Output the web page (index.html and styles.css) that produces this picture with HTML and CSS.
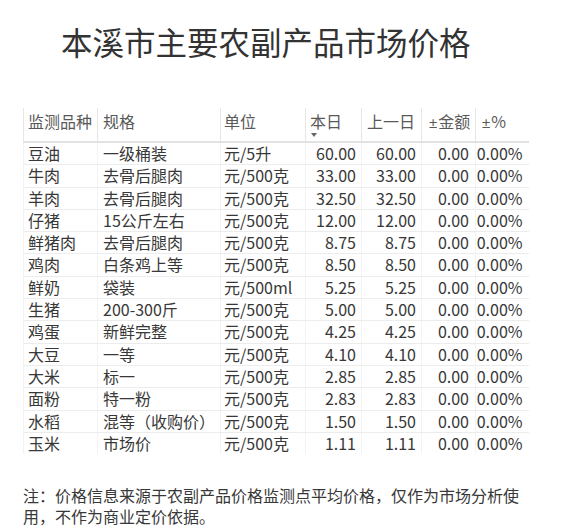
FILE: index.html
```html
<!DOCTYPE html>
<html lang="zh-CN">
<head>
<meta charset="utf-8">
<title>本溪市主要农副产品市场价格</title>
<link rel="stylesheet" href="styles.css">
</head>
<body>
<div class="page">
  <h1 class="title">本溪市主要农副产品市场价格</h1>
  <table class="prices">
    <colgroup>
      <col class="c1"><col class="c2"><col class="c3"><col class="c4"><col class="c5"><col class="c6"><col class="c7">
    </colgroup>
    <thead>
      <tr>
        <th class="p1">监测品种</th>
        <th class="p2">规格</th>
        <th class="p3">单位</th>
        <th class="p4">本日<span class="sort"></span></th>
        <th class="p5">上一日</th>
        <th class="p6"><span class="pm">±</span>金额</th>
        <th class="p7"><span class="pm">±</span>%</th>
      </tr>
    </thead>
    <tbody>
      <tr><td class="p1">豆油</td><td class="p2">一级桶装</td><td class="p3">元/5升</td><td class="n4">60.00</td><td class="n5">60.00</td><td class="n6">0.00</td><td class="n7">0.00%</td></tr>
      <tr><td class="p1">牛肉</td><td class="p2">去骨后腿肉</td><td class="p3">元/500克</td><td class="n4">33.00</td><td class="n5">33.00</td><td class="n6">0.00</td><td class="n7">0.00%</td></tr>
      <tr><td class="p1">羊肉</td><td class="p2">去骨后腿肉</td><td class="p3">元/500克</td><td class="n4">32.50</td><td class="n5">32.50</td><td class="n6">0.00</td><td class="n7">0.00%</td></tr>
      <tr><td class="p1">仔猪</td><td class="p2">15公斤左右</td><td class="p3">元/500克</td><td class="n4">12.00</td><td class="n5">12.00</td><td class="n6">0.00</td><td class="n7">0.00%</td></tr>
      <tr><td class="p1">鲜猪肉</td><td class="p2">去骨后腿肉</td><td class="p3">元/500克</td><td class="n4">8.75</td><td class="n5">8.75</td><td class="n6">0.00</td><td class="n7">0.00%</td></tr>
      <tr><td class="p1">鸡肉</td><td class="p2">白条鸡上等</td><td class="p3">元/500克</td><td class="n4">8.50</td><td class="n5">8.50</td><td class="n6">0.00</td><td class="n7">0.00%</td></tr>
      <tr><td class="p1">鲜奶</td><td class="p2">袋装</td><td class="p3">元/500ml</td><td class="n4">5.25</td><td class="n5">5.25</td><td class="n6">0.00</td><td class="n7">0.00%</td></tr>
      <tr><td class="p1">生猪</td><td class="p2">200-300斤</td><td class="p3">元/500克</td><td class="n4">5.00</td><td class="n5">5.00</td><td class="n6">0.00</td><td class="n7">0.00%</td></tr>
      <tr><td class="p1">鸡蛋</td><td class="p2">新鲜完整</td><td class="p3">元/500克</td><td class="n4">4.25</td><td class="n5">4.25</td><td class="n6">0.00</td><td class="n7">0.00%</td></tr>
      <tr><td class="p1">大豆</td><td class="p2">一等</td><td class="p3">元/500克</td><td class="n4">4.10</td><td class="n5">4.10</td><td class="n6">0.00</td><td class="n7">0.00%</td></tr>
      <tr><td class="p1">大米</td><td class="p2">标一</td><td class="p3">元/500克</td><td class="n4">2.85</td><td class="n5">2.85</td><td class="n6">0.00</td><td class="n7">0.00%</td></tr>
      <tr><td class="p1">面粉</td><td class="p2">特一粉</td><td class="p3">元/500克</td><td class="n4">2.83</td><td class="n5">2.83</td><td class="n6">0.00</td><td class="n7">0.00%</td></tr>
      <tr><td class="p1">水稻</td><td class="p2">混等（收购价）</td><td class="p3">元/500克</td><td class="n4">1.50</td><td class="n5">1.50</td><td class="n6">0.00</td><td class="n7">0.00%</td></tr>
      <tr><td class="p1">玉米</td><td class="p2">市场价</td><td class="p3">元/500克</td><td class="n4">1.11</td><td class="n5">1.11</td><td class="n6">0.00</td><td class="n7">0.00%</td></tr>
    </tbody>
  </table>
  <p class="note">注：价格信息来源于农副产品价格监测点平均价格，仅作为市场分析使用，不作为商业定价依据。</p>
</div>
</body>
</html>
```

FILE: styles.css
```css
html, body {
  margin: 0;
  padding: 0;
  background: #ffffff;
}

body {
  font-family: "Noto Sans CJK SC", "Noto Sans", sans-serif;
  color: #383838;
}

.page {
  width: 505px;
  padding: 21px 0 0 23px;
}

.title {
  margin: 0 0 47px 38px;
  font-size: 31.5px;
  line-height: 40px;
  font-weight: 400;
  color: #333333;
  white-space: nowrap;
}

.prices {
  width: 505px;
  table-layout: fixed;
  border-collapse: collapse;
  font-size: 16px;
}

.c1 { width: 74px; }
.c2 { width: 123px; }
.c3 { width: 85px; }
.c4 { width: 56px; }
.c5 { width: 60px; }
.c6 { width: 54px; }
.c7 { width: 53px; }

.prices th {
  height: 31px;
  padding-top: 2px;
  padding-bottom: 0;
  vertical-align: top;
  text-align: left;
  font-weight: 400;
  line-height: 22px;
  color: #595959;
  border-left: 1px solid #e6e6e6;
  border-bottom: 2px solid #e2e2e2;
  white-space: nowrap;
}

.pm {
  font-family: "Liberation Sans", sans-serif;
  font-size: 15px;
  margin-right: 1px;
}

.sort {
  display: block;
  width: 0;
  height: 0;
  margin: 1px 0 0 1px;
  border-top: 4px solid #666666;
  border-left: 3.5px solid transparent;
  border-right: 3.5px solid transparent;
}

.prices td {
  padding-top: 0;
  padding-bottom: 0;
  line-height: 21.3px;
  color: #383838;
  border-left: 1px solid #f3f3f3;
  border-bottom: 1px solid #ececec;
  white-space: nowrap;
  overflow: hidden;
}

.prices tbody tr:last-child td {
  border-bottom: none;
}

.p1 { padding-left: 4px; padding-right: 0; }
.p2 { padding-left: 5px; padding-right: 0; }
.p3 { padding-left: 3px; padding-right: 0; }
.p4 { padding-left: 4px; padding-right: 0; }
.p5 { padding-left: 5px; padding-right: 0; }
.p6 { padding-left: 7px; padding-right: 0; }
.p7 { padding-left: 6px; padding-right: 0; }

.n4, .n5, .n6, .n7 {
  text-align: right;
  padding-left: 0;
}
.n4 { padding-right: 5px; }
.n5 { padding-right: 5px; }
.n6 { padding-right: 6px; }
.n7 { padding-right: 6px; }

.note {
  margin: 31px 0 0 0;
  width: 505px;
  font-size: 16px;
  line-height: 21px;
  color: #383838;
}
```
